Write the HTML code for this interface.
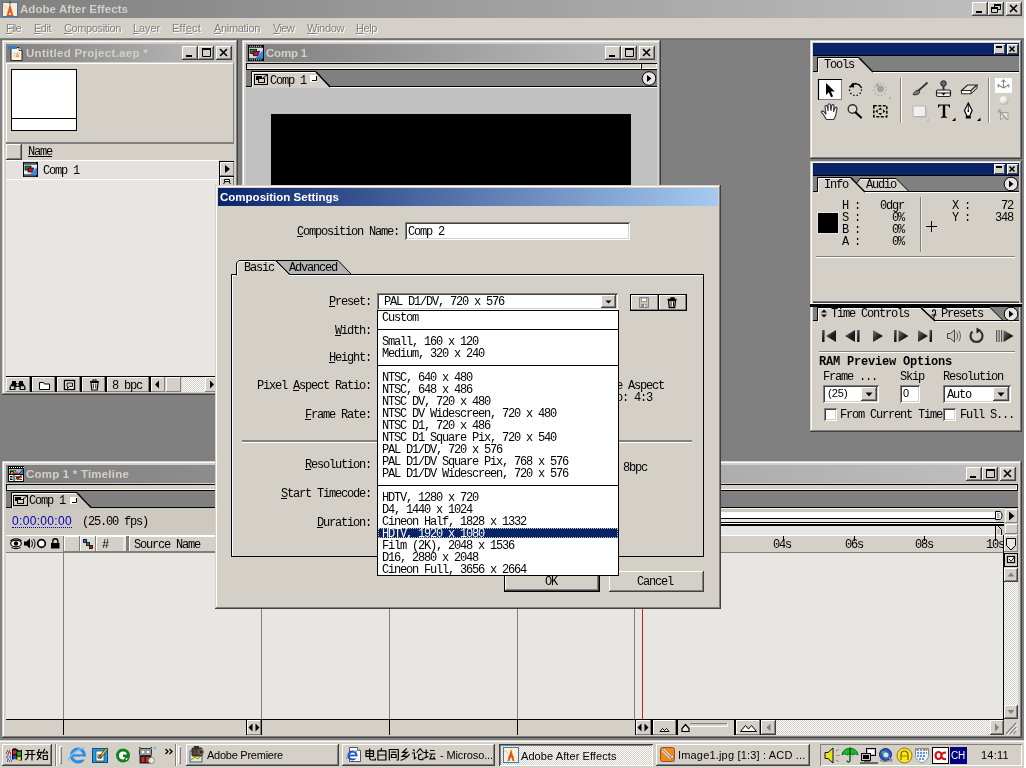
<!DOCTYPE html>
<html><head><meta charset="utf-8"><title>Adobe After Effects</title>
<style>
*{box-sizing:border-box;margin:0;padding:0}
html,body{width:1026px;height:768px;overflow:hidden;background:#808080}
body{position:relative;font-family:"Liberation Sans",sans-serif;font-size:11px;color:#000}
.a{position:absolute}
#root{position:absolute;left:0;top:0;width:1026px;height:768px;will-change:transform}
.s{margin-top:1px;font-family:"Liberation Mono",monospace;font-size:12px;letter-spacing:-1.2px;line-height:12px;white-space:pre;color:#000}
.t{font-family:"Liberation Sans",sans-serif;font-size:11px;line-height:13px;white-space:pre}
.tb{font-family:"Liberation Sans",sans-serif;font-size:11.5px;font-weight:bold;line-height:13px;white-space:pre}
.mi{color:#808080;text-shadow:1px 1px #fff;font-size:11px}
.face{background:#d4d0c8}
.win{background:#d4d0c8;box-shadow:inset -1px -1px #404040,inset 1px 1px #d4d0c8,inset -2px -2px #808080,inset 2px 2px #fff}
.btn{background:#d4d0c8;box-shadow:inset -1px -1px #404040,inset 1px 1px #fff,inset -2px -2px #808080,inset 2px 2px #d4d0c8}
.btn1{background:#d4d0c8;box-shadow:inset -1px -1px #808080,inset 1px 1px #fff}
.sunk{box-shadow:inset 1px 1px #808080,inset -1px -1px #fff,inset 2px 2px #404040,inset -2px -2px #d4d0c8}
.sunk1{box-shadow:inset 1px 1px #808080,inset -1px -1px #fff}
.dith{background-image:conic-gradient(#fff 25%,#d4d0c8 0 50%,#fff 0 75%,#d4d0c8 0);background-size:2px 2px}
.pb{width:11px;height:10px;background:#d4d0c8;box-shadow:inset 1px 1px #fff,inset -1px -1px #404040}
.icap{background:linear-gradient(90deg,#808080,#c0c0c0)}
u{text-decoration:underline}
svg{position:absolute;overflow:visible}
</style></head><body><div id="root">

<!-- right white strip -->
<div class="a" style="left:1024px;top:0;width:2px;height:768px;background:#fff"></div>

<!-- APP TITLE BAR -->
<div class="a icap" id="apptitle" style="left:0;top:0;width:1024px;height:18px"></div>
<div class="a tb" id="apptxt" style="letter-spacing:0.057px;left:20px;top:3px;color:#d4d0c8">Adobe After Effects</div>
<div class="a btn" style="left:972px;top:2px;width:16px;height:14px"></div>
<div class="a btn" style="left:988px;top:2px;width:16px;height:14px"></div>
<div class="a btn" style="left:1006px;top:2px;width:16px;height:14px"></div>

<svg class="a" style="left:2px;top:1px" width="16" height="16" viewBox="0 0 16 16"><rect x=".5" y="1.500" width="15" height="14" fill="#fdebd0" stroke="#3a78b0"/><path d="M1 4l5 4" stroke="#f0c890" stroke-width=".8"/><path d="M8 2.500l-3.200 12h1.800l1.400-5 1.400 5h1.800z" fill="#d85a20"/><path d="M5.500 11h5M4.500 14.500h7" stroke="#d85a20" stroke-width="1"/><path d="M8 0v3" stroke="#222" stroke-width="1"/><path d="M5 1.500h6" stroke="#3a78b0"/></svg>
<svg class="a" style="left:972px;top:2px" width="50" height="14" viewBox="0 0 50 14"><rect x="4" y="9" width="6" height="2" fill="#000"/><path d="M22.500 3.500h6v4h-6z" fill="none" stroke="#000" stroke-width="1"/><rect x="22" y="2" width="7" height="2" fill="#000"/><path d="M19.500 6.500h6v4h-6z" fill="#d4d0c8" stroke="#000" stroke-width="1"/><rect x="19" y="5" width="7" height="2" fill="#000"/><path d="M38 3l7 7M45 3l-7 7" stroke="#000" stroke-width="1.600"/></svg>
<!-- MENU BAR -->
<div class="a face" style="left:0;top:18px;width:1024px;height:20px"></div>
<div class="a" style="left:0;top:38px;width:1024px;height:1px;background:#808080"></div>
<div class="a" style="left:0;top:39px;width:1024px;height:1px;background:#707070"></div>
<div class="a t mi" id="m0" style="letter-spacing:-0.688px;left:6px;top:22px"><u>F</u>ile</div>
<div class="a t mi" id="m1" style="letter-spacing:-0.492px;left:34px;top:22px"><u>E</u>dit</div>
<div class="a t mi" id="m2" style="letter-spacing:-0.378px;left:64px;top:22px"><u>C</u>omposition</div>
<div class="a t mi" id="m3" style="letter-spacing:-0.106px;left:133px;top:22px"><u>L</u>ayer</div>
<div class="a t mi" id="m4" style="letter-spacing:0.174px;left:172px;top:22px">Eff<u>e</u>ct</div>
<div class="a t mi" id="m5" style="letter-spacing:-0.325px;left:214px;top:22px"><u>A</u>nimation</div>
<div class="a t mi" id="m6" style="letter-spacing:-0.664px;left:273px;top:22px"><u>V</u>iew</div>
<div class="a t mi" id="m7" style="letter-spacing:-0.357px;left:307px;top:22px"><u>W</u>indow</div>
<div class="a t mi" id="m8" style="letter-spacing:-0.410px;left:356px;top:22px"><u>H</u>elp</div>

<!-- PROJECT WINDOW -->
<div class="a win" style="left:2px;top:40px;width:236px;height:355px"></div>
<div class="a icap" style="left:6px;top:44px;width:228px;height:18px"></div>
<svg class="a" style="left:8px;top:45px" width="16" height="16" viewBox="0 0 16 16"><path d="M3 2.5h8l3 3v10H3z" fill="#fff7ea" stroke="#222" stroke-width="1"/><rect x="0" y="1" width="9" height="3" fill="#2f7fd0"/><path d="M11 2.5v3h3" fill="#fff" stroke="#222" stroke-width=".8"/><path d="M8 12l1.5-5 1.5 5z" fill="#e0703a"/><rect x="5" y="7" width="7" height="6" fill="#f6c690" opacity=".5"/></svg>
<div class="a tb" id="projtxt" style="letter-spacing:0.288px;left:26px;top:47px;color:#d4d0c8">Untitled Project.aep *</div>
<div class="a btn" style="left:182px;top:46px;width:16px;height:14px"></div>
<div class="a btn" style="left:198px;top:46px;width:16px;height:14px"></div>
<div class="a btn" style="left:216px;top:46px;width:16px;height:14px"></div>
<svg class="a" style="left:182px;top:46px" width="50" height="14" viewBox="0 0 50 14"><rect x="4" y="9" width="6" height="2" fill="#000"/><path d="M20.5 3.5h8v7h-8z M20 3h9" fill="none" stroke="#000" stroke-width="1"/><rect x="20" y="2" width="9" height="2" fill="#000"/><path d="M38 3l7 7M45 3l-7 7" stroke="#000" stroke-width="1.6"/></svg>
<!-- upper panel -->
<div class="a btn1" style="left:6px;top:63px;width:228px;height:81px;box-shadow:inset -1px -2px #808080,inset 1px 1px #fff"></div>
<div class="a" style="left:11px;top:69px;width:66px;height:62px;background:#fff;border:1px solid #000"></div>
<div class="a" style="left:11px;top:118px;width:66px;height:1px;background:#000"></div>
<!-- header -->
<div class="a face" style="left:6px;top:144px;width:228px;height:16px"></div>
<div class="a btn" style="left:6px;top:144px;width:16px;height:16px"></div>
<div class="a s" style="left:28px;top:145px"><u>Name</u></div>
<!-- list -->
<div class="a" style="left:6px;top:160px;width:228px;height:217px;background:#e8e6e2"></div>
<div class="a" style="left:6px;top:160px;width:213px;height:1px;background:#fff"></div>
<div class="a" style="left:6px;top:161px;width:213px;height:18px;background:#e4e2de"></div>
<div class="a" style="left:6px;top:179px;width:213px;height:1px;background:#fff"></div>
<svg class="a" style="left:23px;top:162px" width="15" height="15" viewBox="0 0 15 15"><rect width="15" height="15" fill="#000"/><rect x="1" y="2.5" width="13" height="10" fill="#e8e8ff"/><path d="M7 12.5L14 5v7.5z" fill="#1f8fff"/><rect x="2" y="4" width="6" height="4" fill="#1a8a3a" stroke="#000" stroke-width=".7"/><path d="M5 6h6l-2 4H5z" fill="#e01010" stroke="#000" stroke-width=".7"/><path d="M1.5 1.2h12M1.5 13.8h12" stroke="#fff" stroke-width="1" stroke-dasharray="1 1"/></svg>
<div class="a s" style="left:43px;top:164px">Comp 1</div>
<div class="a face" style="left:219px;top:160px;width:15px;height:217px"></div>
<div class="a" style="left:219px;top:161px;width:1px;height:216px;background:#000"></div>
<div class="a" style="left:219px;top:161px;width:15px;height:1px;background:#000"></div>
<div class="a btn1" style="left:220px;top:162px;width:14px;height:14px"></div>
<div class="a" style="left:219px;top:176px;width:15px;height:1px;background:#000"></div>
<div class="a btn1" style="left:220px;top:177px;width:14px;height:14px"></div>
<svg class="a" style="left:220px;top:162px" width="14" height="30"><path d="M5 3l5 4-5 4z" fill="#000"/><path d="M4.500 17.500h5v2h-5zM5 20l-1.500 2M9 20l1.500 2" fill="#fff" stroke="#000" stroke-width="1"/></svg>
<!-- bottom toolbar -->
<div class="a face" style="left:6px;top:377px;width:228px;height:14px"></div>
<div class="a" style="left:6px;top:376px;width:228px;height:1px;background:#000"></div>
<div class="a btn1" style="left:6px;top:377px;width:24px;height:15px"></div>
<div class="a btn1" style="left:32px;top:377px;width:23px;height:15px"></div>
<div class="a btn1" style="left:57px;top:377px;width:23px;height:15px"></div>
<div class="a btn1" style="left:82px;top:377px;width:23px;height:15px"></div>
<div class="a btn1" style="left:107px;top:377px;width:42px;height:15px"></div>
<div class="a btn1" style="left:151px;top:377px;width:14px;height:15px"></div>
<div class="a btn1" style="left:166px;top:377px;width:15px;height:15px"></div>
<div class="a dith" style="left:182px;top:377px;width:23px;height:15px"></div>
<div class="a btn1" style="left:205px;top:377px;width:14px;height:15px"></div>
<div class="a" style="left:30px;top:377px;width:2px;height:15px;background:#000"></div>
<div class="a" style="left:55px;top:377px;width:2px;height:15px;background:#000"></div>
<div class="a" style="left:80px;top:377px;width:2px;height:15px;background:#000"></div>
<div class="a" style="left:105px;top:377px;width:2px;height:15px;background:#000"></div>
<div class="a" style="left:149px;top:377px;width:2px;height:15px;background:#000"></div>
<svg class="a" style="left:6px;top:377px" width="214" height="15" viewBox="0 0 214 15">
<g fill="#000"><path d="M6 4h4v2h3V4h4v2l2.500 4v3h-6v-3h-4v3h-6v-3l2.500-4z"/><rect x="4.800" y="9.300" width="3.400" height="2.700" fill="#d4d0c8"/><rect x="14.800" y="9.300" width="3.400" height="2.700" fill="#d4d0c8"/><rect x="10.500" y="6.500" width="2" height="2.500" fill="#d4d0c8"/></g>
<path d="M33.500 5.500h4l1 1.500h5v5.500h-10z" fill="#fff" stroke="#000" stroke-width="1"/>
<rect x="58.500" y="3.500" width="10" height="9" fill="#fff" stroke="#000" stroke-width="1.400"/><path d="M61 6h5.500v3.500h-3l-2 2v-2h-.5z" fill="#d4d0c8" stroke="#000" stroke-width=".9"/>
<path d="M84 4.500h9M87 4V3h3v1M85 5.500l.8 7.500h5.400l.8-7.500z" fill="#fff" stroke="#000" stroke-width="1.200"/><path d="M87.300 6.500v5M89.800 6.500v5" stroke="#000" stroke-width=".9"/>
<path d="M149 7.500l4-4v8z" fill="#000"/><path d="M208 7.500l-4-4v8z" fill="#000"/></svg>
<div class="a s" style="left:112px;top:379px">8 bpc</div>

<!-- COMP WINDOW -->
<div class="a win" style="left:242px;top:40px;width:419px;height:200px"></div>
<div class="a icap" style="left:246px;top:44px;width:411px;height:18px"></div>
<svg class="a" style="left:248px;top:45px" width="16" height="16" viewBox="0 0 15 15"><rect width="15" height="15" fill="#000"/><rect x="1" y="2.500" width="13" height="10" fill="#d8d8e8"/><path d="M7 12.500L14 5v7.500z" fill="#1f8fff"/><rect x="2" y="4" width="6" height="4" fill="#1a8a3a" stroke="#000" stroke-width=".7"/><path d="M5 6h6l-2 4H5z" fill="#e01010" stroke="#000" stroke-width=".7"/><path d="M1.500 1.200h12M1.500 13.800h12" stroke="#fff" stroke-width="1" stroke-dasharray="1 1"/></svg>
<div class="a tb" style="letter-spacing:-0.195px;left:266px;top:47px;color:#d4d0c8">Comp 1</div>
<div class="a btn" style="left:605px;top:46px;width:16px;height:14px"></div>
<div class="a btn" style="left:621px;top:46px;width:16px;height:14px"></div>
<div class="a btn" style="left:639px;top:46px;width:16px;height:14px"></div>
<svg class="a" style="left:605px;top:46px" width="50" height="14" viewBox="0 0 50 14"><rect x="4" y="9" width="6" height="2" fill="#000"/><path d="M20.500 3.500h8v7h-8z" fill="none" stroke="#000" stroke-width="1"/><rect x="20" y="2" width="9" height="2" fill="#000"/><path d="M38 3l7 7M45 3l-7 7" stroke="#000" stroke-width="1.600"/></svg>
<!-- white bar -->
<div class="a" style="left:246px;top:63px;width:411px;height:7px;background:#000"></div>
<div class="a" style="left:247px;top:64px;width:394px;height:5px;background:#d4d0c8;box-shadow:inset -1px -1px #fff"></div>
<div class="a" style="left:642px;top:64px;width:15px;height:5px;background:#d4d0c8;box-shadow:inset -1px -1px #fff"></div>
<!-- tab strip -->
<div class="a" style="left:246px;top:70px;width:411px;height:16px;background:#808080"></div>
<svg class="a" style="left:246px;top:70px" width="411" height="18" viewBox="0 0 411 18"><path d="M0 16.500h5.500V1.500H70L84 16.500H411" fill="none" stroke="#000" stroke-width="1"/><path d="M6 17V2H70L84 17z" fill="#d4d0c8"/><path d="M6.500 17V2.500H69.500" fill="none" stroke="#fff" stroke-width="1"/><path d="M70 2L84 17" stroke="#000" stroke-width="1.200"/><path d="M84 17.500H411" stroke="#fff" stroke-width="1"/>
<rect x="8.500" y="4.500" width="13" height="10" fill="#d4d0c8" stroke="#000" stroke-width="1"/><rect x="10" y="6" width="6" height="4" fill="#000"/><rect x="12.500" y="8.500" width="6" height="4" fill="#d4d0c8" stroke="#000" stroke-width="1"/><path d="M17 8l4-3" stroke="#000" stroke-width="1"/>
<rect x="64" y="5" width="7" height="7" fill="#fff"/><path d="M66 10.500h4.500V6" fill="none" stroke="#000" stroke-width="1"/>
<circle cx="403" cy="8.500" r="6.800" fill="#e8e6e2" stroke="#000" stroke-width="1"/><path d="M401 5l4.500 3.500L401 12z" fill="#000"/></svg>
<div class="a s" style="left:270px;top:74px">Comp 1</div>
<!-- comp view -->
<div class="a" style="left:246px;top:88px;width:411px;height:120px;background:#c0c0c0"></div>
<div class="a" style="left:271px;top:114px;width:360px;height:100px;background:#000"></div>

<!-- TIMELINE WINDOW -->
<div class="a win" style="left:2px;top:461px;width:1020px;height:277px"></div>
<div class="a icap" style="left:6px;top:465px;width:1012px;height:18px"></div>
<svg class="a" style="left:8px;top:466px" width="16" height="16" viewBox="0 0 16 16"><rect width="16" height="16" fill="#000"/><path d="M1 1.500h15" stroke="#fff" stroke-width="1" stroke-dasharray="1 1"/><rect x="1" y="3" width="14" height="5" fill="#aab4b4"/><path d="M2.500 8V4.500h5V6" fill="none" stroke="#1f8a2a" stroke-width="1.200"/><path d="M2.500 8V5.500h3V7" fill="none" stroke="#000" stroke-width=".8"/><rect x="4.500" y="6.500" width="6" height="1.500" fill="#e01010"/><path d="M11 8l4-4.500V8z" fill="#1f8fff"/><path d="M11 8l4-4.500" stroke="#000" stroke-width=".8"/><rect x="1" y="9" width="14" height="6" fill="#fff"/><rect x="2" y="10" width="2.500" height="1.500" fill="#000"/><rect x="2" y="12.500" width="2.500" height="1.500" fill="#000"/><rect x="5.500" y="9" width="1" height="6" fill="#000"/><path d="M7 10.500h4" stroke="#1f8a2a" stroke-width="1"/><path d="M10 10.500h3" stroke="#e01010" stroke-width="1"/><path d="M7 13h6" stroke="#1f8a2a" stroke-width="1"/><path d="M9 13.500h5" stroke="#e01010" stroke-width="1"/><path d="M8 11.500h4M8 12.200h3" stroke="#000" stroke-width=".8"/><rect x="12.500" y="9" width="1" height="3" fill="#000"/></svg>
<div class="a tb" style="letter-spacing:0.207px;left:26px;top:468px;color:#d4d0c8">Comp 1 * Timeline</div>
<div class="a btn" style="left:966px;top:467px;width:16px;height:14px"></div>
<div class="a btn" style="left:982px;top:467px;width:16px;height:14px"></div>
<div class="a btn" style="left:1000px;top:467px;width:16px;height:14px"></div>
<svg class="a" style="left:966px;top:467px" width="50" height="14" viewBox="0 0 50 14"><rect x="4" y="9" width="6" height="2" fill="#000"/><path d="M20.500 3.500h8v7h-8z" fill="none" stroke="#000" stroke-width="1"/><rect x="20" y="2" width="9" height="2" fill="#000"/><path d="M38 3l7 7M45 3l-7 7" stroke="#000" stroke-width="1.600"/></svg>
<!-- white bar -->
<div class="a" style="left:6px;top:484px;width:1012px;height:7px;background:#000"></div>
<div class="a" style="left:7px;top:485px;width:1010px;height:5px;background:#d4d0c8;box-shadow:inset -1px -1px #fff"></div>
<!-- tab strip -->
<div class="a" style="left:6px;top:491px;width:1012px;height:16px;background:#808080"></div>
<div class="a" style="left:6px;top:507px;width:1012px;height:1px;background:#000"></div>
<!-- time row -->
<div class="a" style="left:6px;top:508px;width:1012px;height:27px;background:#cdc8c0"></div>
<svg class="a" style="left:6px;top:491px" width="100" height="18" viewBox="0 0 100 18"><path d="M0 16.500H5.500V1.500H71L85 16.500" fill="none" stroke="#000" stroke-width="1"/><path d="M6 18V2H71L86 18z" fill="#c9c6c1"/><path d="M6.500 17V2.500H70.500" fill="none" stroke="#fff" stroke-width="1"/><path d="M71 2L85 16.500" stroke="#000" stroke-width="1.200"/>
<rect x="7.500" y="4.500" width="14" height="10" fill="#d4d0c8" stroke="#000" stroke-width="1"/><rect x="9" y="6" width="6" height="4" fill="#000"/><rect x="11.500" y="8.500" width="6" height="4" fill="#d4d0c8" stroke="#000" stroke-width="1"/><path d="M17 8l4-3" stroke="#000" stroke-width="1"/>
<rect x="64" y="6" width="7" height="7" fill="#fff"/><path d="M66 11.500h4.500V7" fill="none" stroke="#000" stroke-width="1"/></svg>
<div class="a s" style="left:29px;top:494px">Comp 1</div>
<div class="a t" style="letter-spacing:0.328px;left:12px;top:515px;color:#0000c0;font-size:12px;border-bottom:1px dotted #0000c0;line-height:12px">0:00:00:00</div>
<div class="a s" style="left:82px;top:515px">(25.00 fps)</div>
<!-- time navigator right of dialog -->
<div class="a" style="left:480px;top:508px;width:524px;height:1px;background:#f4f2ee"></div>
<div class="a" style="left:480px;top:512px;width:516px;height:6px;background:#fff"></div>
<div class="a" style="left:480px;top:518px;width:516px;height:1px;background:#000"></div>
<div class="a" style="left:480px;top:519px;width:516px;height:3px;background:#e8e8e8"></div>
<div class="a" style="left:480px;top:522px;width:524px;height:1px;background:#000"></div>
<div class="a" style="left:480px;top:523px;width:524px;height:1px;background:#fff"></div>
<div class="a" style="left:480px;top:524px;width:524px;height:2px;background:#000"></div>
<div class="a" style="left:480px;top:526px;width:516px;height:9px;background:#e6e6e6"></div>
<div class="a" style="left:996px;top:526px;width:8px;height:9px;background:#cdc8c0"></div>
<svg class="a" style="left:994px;top:510px" width="10" height="26"><path d="M1.500 1.500h3.500c2 0 3 1.500 3 4s-1 4-3 4H1.500z" fill="#fff" stroke="#000"/><rect x="3" y="3" width="2.500" height="5" fill="#b0b0b0"/><path d="M1.500 15.500h2l4 4v6h-6z" fill="#e0e0e0" stroke="#000"/><rect x="3.500" y="19" width="2" height="5" fill="#b0b0b0"/></svg>
<!-- header row -->
<div class="a face" style="left:6px;top:535px;width:1012px;height:17px"></div>
<div class="a" style="left:6px;top:535px;width:1012px;height:1px;background:#fff"></div>
<div class="a" style="left:6px;top:552px;width:998px;height:1px;background:#808080"></div>
<!-- body -->
<div class="a" style="left:6px;top:553px;width:998px;height:166px;background:#e8e6e2"></div>
<div class="a" style="left:63px;top:536px;width:1px;height:183px;background:#808080"></div>
<div class="a btn1" style="left:64px;top:536px;width:16px;height:16px"></div>
<div class="a btn1" style="left:80px;top:536px;width:16px;height:16px;background:#dcdad4"></div>
<div class="a btn1" style="left:96px;top:536px;width:31px;height:16px"></div>
<div class="a" style="left:123px;top:537px;width:3px;height:14px;background:#e8e6e2;box-shadow:1px 0 #808080"></div>
<div class="a btn1" style="left:129px;top:536px;width:400px;height:16px"></div>
<div class="a" style="left:127px;top:536px;width:2px;height:16px;background:#808080"></div>
<svg class="a" style="left:6px;top:536px" width="100" height="16" viewBox="6 536 100 16">
<ellipse cx="16" cy="543.500" rx="5.300" ry="3.300" fill="#fff" stroke="#000" stroke-width="1.200"/><circle cx="16" cy="543.500" r="2.200" fill="#000"/><path d="M10.500 541c3-3 8-3 11 0" fill="none" stroke="#000" stroke-width="1.200"/><path d="M11.500 547.500c3 1.500 6 1.500 9 0" fill="none" stroke="#000" stroke-width="1"/>
<path d="M24 541.500h2.500l3.500-3v10l-3.500-3H24z" fill="#000"/><path d="M31.500 540.500c1.200 2 1.200 4.500 0 6.500M33.500 539c2 3 2 6.500 0 9.500" fill="none" stroke="#000" stroke-width="1"/>
<circle cx="41.500" cy="543.500" r="3.800" fill="#fff" stroke="#000" stroke-width="1.700"/>
<rect x="51" y="543" width="8.500" height="5.500" fill="#000"/><path d="M52.800 543v-2c0-3 5-3 5 0v2" fill="none" stroke="#000" stroke-width="1.300"/>
<rect x="83.500" y="539.500" width="3" height="3" fill="#1f6fff" stroke="#000" stroke-width=".8"/><rect x="86.500" y="542.500" width="3" height="3" fill="#1a9a3a" stroke="#000" stroke-width=".8"/><rect x="89.500" y="545.500" width="3" height="3" fill="#e01010" stroke="#000" stroke-width=".8"/></svg>
<div class="a s" style="left:102px;top:538px">#</div>
<div class="a s" style="left:134px;top:538px">Source Name</div>
<!-- ruler labels -->
<div class="a s" style="left:773px;top:538px">04s</div><div class="a s" style="left:845px;top:538px">06s</div><div class="a s" style="left:915px;top:538px">08s</div><div class="a s" style="left:986px;top:538px">10s</div>
<div class="a" style="left:783px;top:536px;width:1px;height:5px;background:#000"></div><div class="a" style="left:854px;top:536px;width:1px;height:5px;background:#000"></div><div class="a" style="left:924px;top:536px;width:1px;height:5px;background:#000"></div><div class="a" style="left:995px;top:530px;width:1px;height:11px;background:#000"></div>
<!-- body vertical lines -->
<div class="a" style="left:261px;top:553px;width:1px;height:166px;background:#808080"></div>
<div class="a" style="left:389px;top:553px;width:1px;height:166px;background:#808080"></div>
<div class="a" style="left:517px;top:553px;width:1px;height:166px;background:#808080"></div>
<div class="a" style="left:634px;top:553px;width:1px;height:166px;background:#808080"></div>
<div class="a" style="left:642px;top:553px;width:1px;height:166px;background:#d02020"></div>
<!-- right column -->
<div class="a face" style="left:1004px;top:508px;width:14px;height:227px"></div>
<div class="a" style="left:1003px;top:535px;width:1px;height:185px;background:#000"></div>
<div class="a btn1" style="left:1005px;top:509px;width:13px;height:14px"></div>
<div class="a btn1" style="left:1005px;top:524px;width:13px;height:10px"></div>
<div class="a btn1" style="left:1004px;top:535px;width:14px;height:17px"></div>
<div class="a" style="left:1004px;top:553px;width:14px;height:14px;background:#d4d0c8;border:1px solid #000"></div>
<div class="a btn" style="left:1004px;top:568px;width:14px;height:14px"></div>
<div class="a dith" style="left:1004px;top:582px;width:14px;height:123px"></div>
<div class="a btn" style="left:1004px;top:705px;width:14px;height:14px"></div>
<svg class="a" style="left:1004px;top:508px" width="14" height="212" viewBox="1004 508 14 212"><path d="M1009 511.500l5.500 4.500-5.500 4.500z" fill="#000"/><path d="M1006.500 538.500h9v7l-4.500 4.500-4.500-4.500z" fill="#e8e6e2" stroke="#000" stroke-width="1"/><rect x="1007.500" y="556.500" width="7" height="6" fill="#fff" stroke="#000" stroke-width="1.200"/><path d="M1009 559l2 2.500 3.500-4.500" fill="none" stroke="#000" stroke-width="1"/><path d="M1011 572.500l3.500 4h-7z" fill="#808080"/><path d="M1011 714l3.500-4h-7z" fill="#808080"/></svg>
<!-- bottom strip -->
<div class="a" style="left:6px;top:719px;width:998px;height:1px;background:#000"></div>
<div class="a face" style="left:6px;top:720px;width:1012px;height:15px"></div>
<div class="a" style="left:63px;top:720px;width:1px;height:15px;background:#000"></div>
<div class="a" style="left:261px;top:720px;width:1px;height:15px;background:#000"></div>
<div class="a" style="left:389px;top:720px;width:1px;height:15px;background:#000"></div>
<div class="a" style="left:517px;top:720px;width:1px;height:15px;background:#000"></div>
<div class="a btn1" style="left:246px;top:720px;width:15px;height:15px;border-left:1px solid #000"></div>
<div class="a btn1" style="left:635px;top:720px;width:16px;height:15px;border-left:1px solid #000"></div>
<div class="a" style="left:651px;top:720px;width:2px;height:15px;background:#000"></div>
<div class="a btn1" style="left:653px;top:720px;width:23px;height:15px"></div>
<div class="a" style="left:676px;top:720px;width:2px;height:15px;background:#000"></div>
<div class="a" style="left:734px;top:720px;width:2px;height:15px;background:#000"></div>
<div class="a btn1" style="left:736px;top:720px;width:24px;height:15px"></div>
<div class="a" style="left:760px;top:720px;width:1px;height:15px;background:#000"></div>
<div class="a btn" style="left:761px;top:720px;width:15px;height:15px"></div>
<div class="a dith" style="left:776px;top:720px;width:214px;height:15px"></div>
<div class="a btn" style="left:990px;top:720px;width:14px;height:15px"></div>
<svg class="a" style="left:6px;top:720px" width="1012" height="15" viewBox="6 720 1012 15">
<path d="M252.500 723.500v8l-4-4zM255.500 723.500v8l4-4z" fill="#000"/><path d="M641.500 723.500v8l-4-4zM644.500 723.500v8l4-4z" fill="#000"/>
<path d="M660 731.500l2.500-3 2 2 2-2 2.500 3z" fill="#fff" stroke="#000" stroke-width="1"/>
<path d="M682 731.500v-3l3.500-4 3.500 4v3z" fill="#e8e6e2" stroke="#000" stroke-width="1.200"/><rect x="690" y="723" width="37" height="4" fill="#d4d0c8"/><path d="M690 723.500h37" stroke="#808080"/><path d="M690 726.500h37.500v-3" fill="none" stroke="#fff"/>
<path d="M740.500 731.500l5-6 3 3.500 3-3.500 5 6z" fill="#fff" stroke="#000" stroke-width="1"/>
<path d="M770.500 723.500v8l-4-4z" fill="#808080"/><path d="M995 723.500v8l4-4z" fill="#808080"/>
<path d="M1016 723l-10 11M1016 727l-6 7M1016 731l-3 3" stroke="#808080" stroke-width="1.200"/><path d="M1017 724l-10 11M1017 728l-6 7" stroke="#fff" stroke-width="1"/></svg>

<!-- DIALOG -->
<div class="a win" style="left:215px;top:185px;width:506px;height:424px"></div>
<div class="a" style="left:218px;top:188px;width:500px;height:18px;background:linear-gradient(90deg,#0a246a,#a6caf0)"></div>
<div class="a tb" style="letter-spacing:0.008px;left:220px;top:191px;color:#fff">Composition Settings</div>
<div class="a s" style="left:297px;top:225px"><u>C</u>omposition Name:</div>
<div class="a sunk" style="left:405px;top:222px;width:225px;height:18px;background:#fff"></div>
<div class="a s" style="left:408px;top:225px">Comp 2</div>
<div class="a" style="left:231px;top:274px;width:473px;height:283px;border:1px solid #000;box-shadow:inset 1px 1px #fff"></div>
<svg class="a" style="left:231px;top:258px" width="131" height="18" viewBox="-1 0 131 18"><path d="M44 2.500H106L119.500 16.500H58z" fill="#b4b4b4" stroke="#000" stroke-width="1"/><path d="M4.500 17.500V5L7 2.500H43.500L57.500 16.500" fill="#d4d0c8" stroke="#000" stroke-width="1"/><path d="M5.500 17.500V5.500L7.500 3.500H43" fill="none" stroke="#fff" stroke-width="1"/><rect x="5" y="16" width="51.500" height="2" fill="#d4d0c8"/><rect x="5" y="16" width="1" height="2" fill="#fff"/></svg>
<div class="a s" style="left:244px;top:261px">Basic</div>
<div class="a s" style="left:289px;top:261px">Advanced</div>
<div class="a s" style="left:329px;top:295px"><u>P</u>reset:</div>
<div class="a s" style="left:335px;top:324px"><u>W</u>idth:</div>
<div class="a s" style="left:329px;top:351px"><u>H</u>eight:</div>
<div class="a s" style="left:257px;top:379px">Pixel <u>A</u>spect Ratio:</div>
<div class="a s" style="left:305px;top:408px"><u>F</u>rame Rate:</div>
<div class="a s" style="left:305px;top:458px"><u>R</u>esolution:</div>
<div class="a s" style="left:281px;top:487px"><u>S</u>tart Timecode:</div>
<div class="a s" style="left:317px;top:516px"><u>D</u>uration:</div>
<div class="a sunk" style="left:377px;top:293px;width:241px;height:17px;background:#fff"></div>
<div class="a s" style="left:384px;top:295px">PAL D1/DV, 720 x 576</div>
<div class="a btn" style="left:601px;top:295px;width:15px;height:13px"></div>
<svg class="a" style="left:601px;top:295px" width="15" height="13"><path d="M4.500 5.500h6l-3 3z" fill="#000"/></svg>
<div class="a" style="left:630px;top:294px;width:57px;height:17px;background:#000"></div>
<div class="a btn1" style="left:631px;top:295px;width:27px;height:15px"></div>
<div class="a btn1" style="left:659px;top:295px;width:27px;height:15px"></div>
<svg class="a" style="left:631px;top:295px" width="56" height="15" viewBox="0 0 56 15"><path d="M8.500 2.500h9v10h-9z" fill="#c8c4bc" stroke="#808080" stroke-width="1"/><rect x="10.500" y="3" width="5" height="3.500" fill="#fff" stroke="#808080" stroke-width=".8"/><rect x="10.500" y="9" width="5" height="3.500" fill="#808080"/><rect x="13" y="9.500" width="1.500" height="2.500" fill="#fff"/><path d="M36.500 4.500h9M40 4V3h3v1M37.500 5.500l.8 7h5.400l.8-7z" fill="#fff" stroke="#000" stroke-width="1.300"/><path d="M40 6.500v5M42.500 6.500v5" stroke="#000" stroke-width="1"/></svg>
<div class="a s" style="left:616px;top:379px">e Aspect</div>
<div class="a s" style="left:616px;top:391px">o: 4:3</div>
<div class="a" style="left:242px;top:440px;width:450px;height:3px;background:#808080;border-bottom:1px solid #fff"></div>
<div class="a s" style="left:623px;top:461px">8bpc</div>
<div class="a" style="left:504px;top:571px;width:96px;height:21px;background:#000"></div>
<div class="a btn" style="left:505px;top:572px;width:94px;height:19px"></div>
<div class="a s" style="left:545px;top:575px">OK</div>
<div class="a btn" style="left:609px;top:571px;width:95px;height:21px"></div>
<div class="a s" style="left:637px;top:575px">Cancel</div>
<div class="a" style="left:377px;top:310px;width:242px;height:266px;background:#fff;border:1px solid #000"></div>
<div class="a" style="left:378px;top:329px;width:240px;height:1px;background:#000"></div>
<div class="a" style="left:378px;top:365px;width:240px;height:1px;background:#000"></div>
<div class="a" style="left:378px;top:485px;width:240px;height:1px;background:#000"></div>
<div class="a" style="left:378px;top:528px;width:240px;height:10px;background:#0a246a;outline:1px dotted #d0c8a0;outline-offset:-1px"></div>
<div class="a s" style="left:382px;top:311px">Custom</div>
<div class="a s" style="left:382px;top:335px">Small, 160 x 120</div>
<div class="a s" style="left:382px;top:347px">Medium, 320 x 240</div>
<div class="a s" style="left:382px;top:371px">NTSC, 640 x 480</div>
<div class="a s" style="left:382px;top:383px">NTSC, 648 x 486</div>
<div class="a s" style="left:382px;top:395px">NTSC DV, 720 x 480</div>
<div class="a s" style="left:382px;top:407px">NTSC DV Widescreen, 720 x 480</div>
<div class="a s" style="left:382px;top:419px">NTSC D1, 720 x 486</div>
<div class="a s" style="left:382px;top:431px">NTSC D1 Square Pix, 720 x 540</div>
<div class="a s" style="left:382px;top:443px">PAL D1/DV, 720 x 576</div>
<div class="a s" style="left:382px;top:455px">PAL D1/DV Square Pix, 768 x 576</div>
<div class="a s" style="left:382px;top:467px">PAL D1/DV Widescreen, 720 x 576</div>
<div class="a s" style="left:382px;top:491px">HDTV, 1280 x 720</div>
<div class="a s" style="left:382px;top:503px">D4, 1440 x 1024</div>
<div class="a s" style="left:382px;top:515px">Cineon Half, 1828 x 1332</div>
<div class="a s" style="left:382px;top:527px;color:#fff">HDTV, 1920 x 1080</div>
<div class="a s" style="left:382px;top:539px">Film (2K), 2048 x 1536</div>
<div class="a s" style="left:382px;top:551px">D16, 2880 x 2048</div>
<div class="a s" style="left:382px;top:563px">Cineon Full, 3656 x 2664</div>
<!-- TOOLS PALETTE -->
<div class="a win" style="left:810px;top:40px;width:212px;height:119px"></div>
<div class="a" style="left:813px;top:43px;width:206px;height:13px;background:#0a246a;border-bottom:1px solid #000"></div>
<div class="a pb" style="left:994px;top:44px"></div><div class="a pb" style="left:1007px;top:44px"></div>
<svg class="a" style="left:994px;top:44px" width="24" height="10"><rect x="2" y="2" width="6" height="2" fill="#000"/><path d="M15.500 2.500l5 5M20.500 2.500l-5 5" stroke="#000" stroke-width="1.500"/></svg>
<div class="a" style="left:813px;top:56px;width:206px;height:16px;background:#808080"></div>
<svg class="a" style="left:813px;top:56px" width="206" height="17" viewBox="0 0 206 17"><path d="M0 15.500H4.500V1.500H46L59 15.500H206" fill="none" stroke="#000" stroke-width="1"/><path d="M5 17V2H46L60 17z" fill="#d4d0c8"/><path d="M5.500 17V2.500H45.500" fill="none" stroke="#fff" stroke-width="1"/><path d="M46 2L60 16" stroke="#000" stroke-width="1.200"/><path d="M60 16.500H206" stroke="#fff" stroke-width="1"/></svg>
<div class="a s" style="left:824px;top:58px">Tools</div>
<!-- tool icons -->
<svg class="a" style="left:810px;top:72px" width="212" height="56" viewBox="810 72 212 56">
<rect x="818.500" y="79.500" width="23" height="20" fill="#fff" stroke="#808080"/><path d="M818.500 100V79.500H842" fill="none" stroke="#000" stroke-width="1.200"/>
<path d="M826 83v12l2.800-2.800 2.300 5 2-1-2.300-4.800h4z" fill="#000"/>
<circle cx="855.500" cy="89.500" r="6" fill="none" stroke="#000" stroke-width="1.400" stroke-dasharray="1.300 2.100"/><path d="M851.500 85.500A6 6 0 0 1 861 87" fill="none" stroke="#000" stroke-width="1.400"/><path d="M849 87l4.500-4.500.7 5z" fill="#000"/>
<circle cx="880" cy="89.500" r="6" fill="none" stroke="#a8a8a8" stroke-width="1.400" stroke-dasharray="1.300 2.100"/><circle cx="880.500" cy="89" r="3.300" fill="#a0a0a0"/><path d="M874.500 86l4-3.500.6 4.500z" fill="#a8a8a8"/><path d="M891 96v3h-3z" fill="#b0b0b0"/>
<path d="M826.500 119.500c-1.500-2.500-3-5-5.200-7.300 .6-1.600 2.200-1.300 3.300 .2l1.400 1.900-1-7.600c0-1.400 1.800-1.600 2.200-.2l1 4.500-.2-6.200c.2-1.500 2.200-1.500 2.400 0l.5 6 .9-5.300c.4-1.400 2.200-1.200 2.200 .3l-.5 6 1.500-3.800c.6-1.200 2.200-.7 2 .6l-1.300 6.500c-.4 2-1.200 3-2 4.400z" fill="#fff" stroke="#333" stroke-width="1.100"/>
<circle cx="852.500" cy="109" r="4.300" fill="#dcdad4" stroke="#333" stroke-width="1.400"/><path d="M855.700 112.500l5.300 5" stroke="#000" stroke-width="2.200" stroke-linecap="round"/>
<rect x="873.800" y="105.800" width="13" height="11" fill="none" stroke="#000" stroke-width="1.500" stroke-dasharray="3 1.500"/><path d="M880.300 107.500l2 2.200h-4zM880.300 115.300l2-2.200h-4zM875.500 111.300l2.200-2v4zM885.300 111.300l-2.200-2v4z" fill="#000"/>
<rect x="900" y="78" width="1" height="45" fill="#808080"/><rect x="901" y="78" width="1" height="45" fill="#fff"/>
<path d="M927.500 82.500l-10 9" stroke="#333" stroke-width="1.800"/><path d="M913 94.500c1.500-3.500 3.500-4.500 5.500-4l1.500 1.500c-1 2.500-4 3.500-7 2.500z" fill="#777" stroke="#222" stroke-width=".8"/>
<circle cx="943.500" cy="83.500" r="2.800" fill="#666" stroke="#222"/><path d="M942.500 86h2v4h-2z" fill="#333"/><rect x="936.500" y="90" width="14" height="6.500" rx="1.500" fill="#eee" stroke="#222" stroke-width="1.200"/><path d="M936.500 93h14" stroke="#222"/><path d="M941.500 93h4l-2 2.500z" fill="#000"/>
<path d="M961.500 90.500l6-5.500h9.500l-6 5.500z" fill="#ddd" stroke="#222" stroke-width="1.100"/><path d="M961.500 90.500v3.300h9.500v-3.300z" fill="#fff" stroke="#222" stroke-width="1"/><path d="M971 93.800l6-5.500V85" fill="none" stroke="#222" stroke-width="1"/>
<rect x="914.500" y="107.500" width="12" height="10" fill="#999" opacity=".5"/><rect x="913" y="106" width="12.500" height="10.500" fill="#f1f0ec" stroke="#aaa" stroke-width=".8"/><path d="M929 118.500v2.500h-2.500z" fill="#b0b0b0"/>
<path d="M938 104.500h12v3h-.8c-.3-1.500-1-2-2.500-2h-1.500v10c0 1 .5 1.300 2 1.400v.8h-6.400v-.8c1.500-.1 2-.4 2-1.400v-10h-1.500c-1.500 0-2.200.5-2.500 2h-.8z" fill="#000"/><path d="M955.500 117.500v3.500H952z" fill="#000"/>
<path d="M968.300 103l-3.800 7.500 2.300 5.500h3l2.300-5.500z" fill="#fff" stroke="#000" stroke-width="1.200"/><path d="M968.300 104v6.500" stroke="#000" stroke-width=".9"/><circle cx="968.300" cy="111" r="1" fill="#000"/><rect x="965.800" y="116" width="5" height="2.500" fill="#000"/><path d="M980.500 117.500v3.500H977z" fill="#000"/>
<rect x="988" y="78" width="1" height="45" fill="#808080"/><rect x="989" y="78" width="1" height="45" fill="#fff"/>
<rect x="995" y="78" width="17" height="15" fill="#fff"/><path d="M1003.500 80v8M1003.500 88l-5-3M1003.500 88l5-3M1001.500 82l2-2.200 2 2.200M998 87.500l.3-2.800 2.300 1.400M1009 87.500l-.3-2.800-2.300 1.400" fill="none" stroke="#888" stroke-width="1.100"/>
<defs><radialGradient id="sg" cx=".35" cy=".3" r=".8"><stop offset="0" stop-color="#fff"/><stop offset=".5" stop-color="#e4e4e4"/><stop offset="1" stop-color="#a0a0a0"/></radialGradient></defs><circle cx="1004" cy="100.500" r="4.600" fill="url(#sg)"/>
<path d="M1000.500 112.500l7.500 0v7.500l-3.700-3-3.800 3z" fill="#e6e4de" stroke="#a0a0a0" stroke-width="1"/><path d="M999 110.500l8 9" stroke="#a0a0a0" stroke-width="1.200"/><path d="M998.500 113v-3h3" fill="none" stroke="#a0a0a0" stroke-width="1"/>
</svg>

<!-- INFO + TIME CONTROLS PALETTE -->
<div class="a win" style="left:810px;top:161px;width:212px;height:271px"></div>
<div class="a" style="left:813px;top:163px;width:206px;height:13px;background:#0a246a;border-bottom:1px solid #000"></div>
<div class="a pb" style="left:994px;top:164px"></div><div class="a pb" style="left:1007px;top:164px"></div>
<svg class="a" style="left:994px;top:164px" width="24" height="10"><rect x="2" y="2" width="6" height="2" fill="#000"/><path d="M15.500 2.500l5 5M20.500 2.500l-5 5" stroke="#000" stroke-width="1.500"/></svg>
<div class="a" style="left:813px;top:176px;width:206px;height:16px;background:#808080"></div>
<svg class="a" style="left:813px;top:176px" width="206" height="17" viewBox="0 0 206 17"><path d="M47 2.500H83L96 15.500H51L43 8z" fill="#d4d0c8" stroke="#000" stroke-width="1"/><path d="M47.500 3.500H82.500" stroke="#fff"/><path d="M0 15.500H4.500V1.500H38L51 15.500H206" fill="none" stroke="#000" stroke-width="1"/><path d="M5 17V2H38L52 17z" fill="#d4d0c8"/><path d="M5.500 17V2.500H37.500" fill="none" stroke="#fff" stroke-width="1"/><path d="M38 2L52 16" stroke="#000" stroke-width="1.200"/><path d="M52 16.500H206" stroke="#fff" stroke-width="1"/>
<circle cx="198" cy="8" r="6.800" fill="#e8e6e2" stroke="#000" stroke-width="1"/><path d="M196 4.500l4.500 3.500L196 11.500z" fill="#000"/></svg>
<div class="a s" style="left:824px;top:178px">Info</div>
<div class="a s" style="left:866px;top:178px">Audio</div>
<div class="a" style="left:818px;top:213px;width:20px;height:20px;background:#000;box-shadow:0 0 0 1px #e8e6e2"></div>
<div class="a s" style="left:842px;top:199px">H :</div><div class="a s" style="left:842px;top:211px">S :</div><div class="a s" style="left:842px;top:223px">B :</div><div class="a s" style="left:842px;top:235px">A :</div>
<div class="a s" style="left:880px;top:199px">0dgr</div><div class="a s" style="left:892px;top:211px">0%</div><div class="a s" style="left:892px;top:223px">0%</div><div class="a s" style="left:892px;top:235px">0%</div>
<div class="a" style="left:920px;top:197px;width:1px;height:55px;background:#808080"></div><div class="a" style="left:921px;top:197px;width:1px;height:55px;background:#e8e6e2"></div>
<svg class="a" style="left:926px;top:221px" width="12" height="12"><path d="M0 5.500h11M5.500 0v11" stroke="#000" stroke-width="1"/></svg>
<div class="a s" style="left:952px;top:199px">X :</div><div class="a s" style="left:952px;top:211px">Y :</div>
<div class="a s" style="left:1001px;top:199px">72</div><div class="a s" style="left:995px;top:211px">348</div>
<div class="a" style="left:816px;top:256px;width:199px;height:1px;background:#808080"></div><div class="a" style="left:816px;top:257px;width:199px;height:1px;background:#fff"></div>
<!-- divider -->
<div class="a" style="left:813px;top:301px;width:206px;height:1px;background:#808080"></div>
<div class="a" style="left:813px;top:302px;width:206px;height:1px;background:#404040"></div>
<div class="a" style="left:810px;top:303px;width:212px;height:1px;background:#fff"></div>
<div class="a" style="left:810px;top:304px;width:212px;height:3px;background:#000"></div>
<!-- time controls tabs -->
<div class="a" style="left:813px;top:307px;width:206px;height:14px;background:#808080"></div>
<svg class="a" style="left:813px;top:306px" width="206" height="16" viewBox="0 0 206 16"><path d="M111 1.500H177L190 14.500H122L106 0z" fill="#d4d0c8" stroke="#000" stroke-width="1"/><path d="M112 2.500H176.500" stroke="#fff"/><path d="M0 14.500H4.500V1.500H108L122 14.500H206" fill="none" stroke="#000" stroke-width="1"/><path d="M5 16V2H108L123 16z" fill="#d4d0c8"/><path d="M5.500 16V2.500H107.500" fill="none" stroke="#fff" stroke-width="1"/><path d="M108 2L122 15" stroke="#000" stroke-width="1.200"/><path d="M123 15.500H206" stroke="#fff" stroke-width="1"/>
<path d="M11 3.500l3 3h-6zM11 11.500l3-3h-6z" fill="#000"/>
<circle cx="198" cy="8" r="6.800" fill="#e8e6e2" stroke="#000" stroke-width="1"/><path d="M196 4.500l4.500 3.500L196 11.500z" fill="#000"/>
<path d="M119.500 6c0-3 3-3 3 0s-3 5-1 6M118.500 9h5" fill="none" stroke="#000" stroke-width="1.100"/></svg>
<div class="a s" style="left:831px;top:307px">Time Controls</div>
<div class="a s" style="left:941px;top:307px">Presets</div>
<!-- transport -->
<svg class="a" style="left:813px;top:322px" width="206" height="30" viewBox="813 322 206 30" fill="url(#tg)"><defs><linearGradient id="tg" x1="0" y1="0" x2="1" y2="1"><stop offset="0" stop-color="#777"/><stop offset=".6" stop-color="#1a1a1a"/></linearGradient></defs>
<rect x="822" y="330" width="2.500" height="12"/><path d="M836 330v12l-10-6z"/>
<path d="M855 330v12l-10-6z"/><rect x="857" y="330" width="2.500" height="12"/>
<path d="M873 330v12l10-6z"/>
<rect x="894" y="330" width="2.500" height="12"/><path d="M898.500 330v12l10-6z"/>
<path d="M918 330v12l10-6z"/><rect x="929.500" y="330" width="2.500" height="12"/>
<path d="M947.500 333.500h3l4-3.500v12l-4-3.500h-3z" fill="#c8c6c0" stroke="#444" stroke-width="1"/><path d="M956.500 332.500c1.500 2 1.500 5 0 7M958.500 330.500c2.500 3 2.500 8 0 11" fill="none" stroke="#555" stroke-width="1"/>
<path d="M972.500 331.500a6 6 0 1 0 8 0" fill="none" stroke="#333" stroke-width="2.200"/><path d="M976.500 327.500v6l5-3z" fill="#222"/>
<rect x="996" y="330" width="1.200" height="12" fill="#555"/><rect x="998.500" y="330" width="1.200" height="12" fill="#555"/><rect x="1001" y="330" width="1.200" height="12" fill="#555"/><path d="M1003.500 330v12l10-6z"/>
</svg>
<div class="a" style="left:819px;top:351px;width:196px;height:1px;background:#808080"></div><div class="a" style="left:819px;top:352px;width:196px;height:1px;background:#fff"></div>
<div class="a s" style="letter-spacing:-0.201px;left:819px;top:355px;font-weight:bold">RAM Preview Options</div>
<div class="a s" style="left:823px;top:370px">Frame ...</div>
<div class="a s" style="left:900px;top:370px">Skip</div>
<div class="a s" style="left:943px;top:370px">Resolution</div>
<div class="a sunk" style="left:823px;top:385px;width:56px;height:18px;background:#fff"></div>
<div class="a btn" style="left:861px;top:387px;width:16px;height:14px"></div>
<div class="a t" style="left:828px;top:387px">(25)</div>
<div class="a sunk" style="left:900px;top:385px;width:20px;height:18px;background:#fff"></div>
<div class="a t" style="left:903px;top:387px">0</div>
<div class="a sunk" style="left:943px;top:385px;width:68px;height:18px;background:#fff"></div>
<div class="a btn" style="left:993px;top:387px;width:16px;height:14px"></div>
<div class="a s" style="left:947px;top:388px">Auto</div>
<svg class="a" style="left:813px;top:385px" width="206" height="18"><path d="M52.500 7.500h7l-3.500 4zM184.500 7.500h7l-3.500 4z" fill="#000"/></svg>
<div class="a sunk" style="left:824px;top:408px;width:13px;height:13px;background:#fff"></div>
<div class="a s" style="left:840px;top:408px">From Current Time</div>
<div class="a sunk" style="left:943px;top:408px;width:13px;height:13px;background:#fff"></div>
<div class="a s" style="left:960px;top:408px">Full S...</div>

<!-- TASKBAR -->
<div class="a face" style="left:0;top:740px;width:1024px;height:28px"></div>
<div class="a" style="left:0;top:741px;width:1024px;height:1px;background:#fff"></div>
<div class="a btn" style="left:2px;top:744px;width:50px;height:22px"></div>
<svg class="a" style="left:6px;top:747px" width="17" height="16" viewBox="0 0 17 16"><path d="M6 2.500c2-2 4-1 5.500 0s3 1.500 4.500 0v10.500c-1.500 1.500-3 1-4.500 0s-3.500-2-5.500 0z" fill="#000"/><path d="M7 3.700c1.300-1 2.300-.7 3.500 0v4c-1.200-.7-2.200-1-3.500 0z" fill="#e02020"/><path d="M11.300 4.200c1.200.7 2.300.7 3.500 0v4c-1.200.7-2.300.7-3.500 0z" fill="#20c020"/><path d="M7 8.700c1.300-1 2.300-.7 3.500 0v4c-1.200-.7-2.200-1-3.500 0z" fill="#2040e0"/><path d="M11.300 9.200c1.200.7 2.300.7 3.500 0v4c-1.200.7-2.300.7-3.500 0z" fill="#e8e020"/><path d="M1 4h4M0 6h5" stroke="#000" stroke-width="1" stroke-dasharray="1 1"/><path d="M1 8h4M2 5h3" stroke="#e02020" stroke-width="1" stroke-dasharray="2 1"/><path d="M0 10h5M1 12h4" stroke="#2040e0" stroke-width="1" stroke-dasharray="2 1"/><path d="M1 14h5" stroke="#000" stroke-dasharray="1 1"/></svg>
<svg class="a cjk" style="left:24px;top:748px" width="24" height="13" viewBox="0 0 24 13"><g fill="none" stroke="#000" stroke-width="1.200">
<path d="M1.500 2.500H10.500M.5 6.500H11.500M4 2.500V7.500Q4 10.500 1 12M8 2.500V12.500"/>
<g transform="translate(12.300,0)"><path d="M3 .8L1.300 6.500 5 10.500M5 3.500Q4.200 9 .5 12M.3 4.500H5.800M8.500 .8L6.500 5H11.200M10 3L11.500 5.500M7 7.500H11V11.500H7z"/></g></g></svg>
<div class="a" style="left:55px;top:744px;width:1px;height:22px;background:#808080"></div><div class="a" style="left:56px;top:744px;width:1px;height:22px;background:#fff"></div>
<div class="a" style="left:59px;top:746px;width:3px;height:18px;background:#d4d0c8;box-shadow:inset 1px 1px #fff,inset -1px -1px #808080"></div>
<!-- quick launch -->
<svg class="a" style="left:66px;top:745px" width="110" height="20" viewBox="66 745 110 20">
<circle cx="78" cy="755.500" r="6.500" fill="none" stroke="#2a8be8" stroke-width="3"/><rect x="73" y="754.300" width="11" height="2.300" fill="#2a8be8"/><rect x="80" y="756.600" width="6" height="3" fill="#d4d0c8"/><path d="M69 761c-2-3 6-11 15-13" fill="none" stroke="#7fbdf0" stroke-width="1.400"/>
<rect x="92.500" y="748.500" width="15" height="14" fill="#1f9fdf" stroke="#0a4a90"/><rect x="96" y="751" width="8" height="10" fill="#fffbe8" stroke="#444" stroke-width=".8"/><path d="M99 757l7-9 1.800 1.300-7 9z" fill="#f0c020" stroke="#222" stroke-width=".7"/><rect x="98" y="755" width="3" height="3" fill="none" stroke="#222" stroke-width=".8"/>
<circle cx="123" cy="755.500" r="5.500" fill="#fff" stroke="#108020" stroke-width="3"/><rect x="123" y="754.500" width="5" height="2.500" fill="#108020"/><circle cx="126.500" cy="759" r="2.300" fill="#108020"/><circle cx="126.500" cy="759" r=".9" fill="#fff"/>
<rect x="139.500" y="748.500" width="12" height="7" rx="1" fill="#999" stroke="#333"/><circle cx="143" cy="752" r="1.300" fill="#fff"/><circle cx="148" cy="752" r="1.300" fill="#fff"/><rect x="139.500" y="755.500" width="12" height="8" fill="#222"/><rect x="141.500" y="757" width="3" height="5" fill="#e02020"/><rect x="146" y="757" width="3" height="5" fill="#e02020"/><path d="M139 747l2 1.500M152 747l-2 1.500" stroke="#333"/><circle cx="151.500" cy="760.500" r="3" fill="#e8e8e8" stroke="#888"/><path d="M153 748l2-2 1.500 4z" fill="#40c8f0"/>
<path d="M165.500 749l2.500 2.500-2.500 2.500M169.500 749l2.500 2.500-2.500 2.500" fill="none" stroke="#000" stroke-width="1.300"/></svg>
<div class="a" style="left:175px;top:744px;width:1px;height:22px;background:#808080"></div><div class="a" style="left:176px;top:744px;width:1px;height:22px;background:#fff"></div>
<div class="a" style="left:178px;top:746px;width:3px;height:18px;background:#d4d0c8;box-shadow:inset 1px 1px #fff,inset -1px -1px #808080"></div>
<!-- task buttons -->
<div class="a btn" style="left:186px;top:744px;width:153px;height:22px"></div>
<svg class="a" style="left:189px;top:746px" width="17" height="17" viewBox="0 0 17 17"><rect x="1" y="5" width="12" height="11" fill="#f4e8a0" stroke="#3060c0"/><rect x="3" y="2" width="10" height="8" rx="1" fill="#5a4030" stroke="#222"/><circle cx="12" cy="6" r="2.500" fill="#303030" stroke="#a08060"/><rect x="5" y="0" width="5" height="3" fill="#303030"/><path d="M2 14l4-3 3 2 3-3" fill="none" stroke="#60a040"/></svg>
<div class="a t" style="letter-spacing:-0.250px;left:207px;top:749px">Adobe Premiere</div>
<div class="a btn" style="left:342px;top:744px;width:153px;height:22px"></div>
<svg class="a" style="left:346px;top:746px" width="17" height="17" viewBox="0 0 17 17"><path d="M3.500 1.500h8l3 3v11h-11z" fill="#fff" stroke="#555"/><path d="M11.500 1.500v3h3" fill="#ddd" stroke="#555" stroke-width=".8"/><circle cx="6.500" cy="9.500" r="4" fill="none" stroke="#2050d0" stroke-width="2.200"/><rect x="3" y="8.600" width="7" height="1.800" fill="#2050d0"/><rect x="8" y="10.400" width="4" height="2.200" fill="#fff"/><path d="M1 13c-1-3 5-8 10-8" fill="none" stroke="#5080e0" stroke-width="1"/></svg>
<svg class="a cjk" style="left:364px;top:748px" width="72" height="13" viewBox="0 0 72 13"><g fill="none" stroke="#000" stroke-width="1.200">
<path d="M2 2.800H9.500V8.300H2zM2 5.500H9.500M5.700 .5V10.500Q5.700 12 7.500 12H11.300V10.300"/>
<g transform="translate(11.900,0)"><path d="M5.800 .3L4.800 2.800M2 2.800H10V12H2zM2 7H10"/></g>
<g transform="translate(23.800,0)"><path d="M1.500 12.500V1.500H10.500V11.500Q10.500 12.200 8.800 12.200M3.500 4.200H8.500M3.700 6.500H8.300V9.500H3.700z"/></g>
<g transform="translate(35.700,0)"><path d="M7 .5L3 4.300H7.500L2.500 8.300H8.500M10 6Q6.500 10.800 1 12.300"/></g>
<g transform="translate(47.600,0)"><path d="M1.300 1.300L3 3M.3 5H2.800V10.800L4.800 9.300M8.500 .5L5 5M8.500 .5L12 5M10 5.800L7 7.500M7 6.300V10.500Q7 11.700 8.500 11.700H11.300V9.800"/></g>
<g transform="translate(59.500,0)"><path d="M.5 4.500H5M2.700 1.500V9.500M.3 10.300L5 8.500M6.500 2.500H11M5.500 6H12M8.500 6L6.500 10.800H11.300M10 8.500L11.800 11.500"/></g></g></svg>
<div class="a t" style="letter-spacing:-0.117px;left:440px;top:749px">- Microso...</div>
<div class="a dith" style="left:499px;top:744px;width:154px;height:22px;box-shadow:inset 1px 1px #404040,inset -1px -1px #fff,inset 2px 2px #808080"></div>
<svg class="a" style="left:503px;top:747px" width="16" height="16" viewBox="0 0 16 16"><rect x=".5" y=".5" width="15" height="15" fill="#fdf0d8" stroke="#3a7ab8"/><path d="M8 2l-3.500 12h2l1.500-5 1.500 5h2z" fill="#d85820"/><path d="M5 10h6" stroke="#d85820"/><path d="M1 3l4 3" stroke="#e8b070" stroke-width=".8"/></svg>
<div class="a t" style="letter-spacing:0.081px;left:521px;top:750px">Adobe After Effects</div>
<div class="a btn" style="left:656px;top:744px;width:154px;height:22px"></div>
<svg class="a" style="left:660px;top:747px" width="16" height="16" viewBox="0 0 16 16"><rect x=".5" y=".5" width="14" height="14" rx="2" fill="#f08820" stroke="#a05010"/><path d="M3 3l8 8" stroke="#fff" stroke-width="3"/><path d="M3 3l8 8" stroke="#888" stroke-width="1.200"/><path d="M10 10l4 1.500-1.500-4z" fill="#fff" stroke="#666" stroke-width=".7"/></svg>
<div class="a t" style="letter-spacing:0.177px;left:678px;top:749px">Image1.jpg [1:3] : ACD ...</div>
<!-- tray -->
<div class="a sunk1" style="left:820px;top:744px;width:202px;height:22px"></div>
<svg class="a" style="left:822px;top:745px" width="150" height="20" viewBox="822 745 150 20">
<path d="M825 752.500h3l5-4.500v15l-5-4.500h-3z" fill="#e8e020" stroke="#000" stroke-width=".9"/><path d="M836 751l2.500-1.500M836.500 755.500h3M836 760l2.500 1.500" stroke="#808080" stroke-width="1"/>
<path d="M842 755c1-9 15-9 16 0c-2-1.500-3.500-1.500-5.300 0c-1.800-1.500-3.500-1.500-5.300 0c-1.800-1.500-3.500-1.500-5.400 0z" fill="#10c020" stroke="#064a10" stroke-width=".8"/><path d="M850 747.500v13c0 2-3 2-3 0" fill="none" stroke="#064a10" stroke-width="1.300"/>
<rect x="866.500" y="748.500" width="9" height="7" fill="#c8c8c8" stroke="#000"/><rect x="868" y="750" width="6" height="4" fill="#fff"/><rect x="861.500" y="753.500" width="9" height="7" fill="#c8c8c8" stroke="#000"/><rect x="863" y="755" width="6" height="4" fill="#000"/><path d="M860 763h18M864 761h6" stroke="#000" stroke-width="1.200"/>
<circle cx="885.500" cy="754.500" r="6" fill="#3058c8" stroke="#102060"/><path d="M881 752c2-2 5-1 6 1s-1 4-3 4" fill="#50b050"/><circle cx="886" cy="755" r="2.500" fill="#d0e0ff"/><path d="M880 760c3 2 9 2 12-1" fill="none" stroke="#808080" stroke-width="1.500"/><path d="M889 757l3 5" stroke="#888" stroke-width="1.300"/>
<circle cx="904.500" cy="755.500" r="7.500" fill="#f8e820" stroke="#907800"/><path d="M901 760v-5.500a3.500 3.500 0 0 1 7 0V760" fill="none" stroke="#806000" stroke-width="1.200"/><path d="M901.500 756h6" stroke="#806000" stroke-width=".8"/>
<path d="M915.500 748.500h13v7c0 3-3 6-6.500 7.500c-3.500-1.500-6.500-4.500-6.500-7.500z" fill="#f4f4f4" stroke="#888"/><path d="M917 750h10M917 753h10M917 756h9M919 759h6" stroke="#2878e0" stroke-width="1.500" stroke-dasharray="2 1"/><path d="M916 749.500h3M925 749.500h3" stroke="#e09020" stroke-width="1.500"/>
<rect x="932.500" y="747.500" width="16" height="16" fill="#fff" stroke="#000"/><path d="M938.500 752a3 3.500 0 1 0 0 7a3 3.500 0 1 0 0-7M946 752.500c-3 0-4.500 1.500-4.500 3.500s1.500 3.500 4.500 3" fill="none" stroke="#e01010" stroke-width="2.200"/>
<rect x="950" y="747" width="17" height="17" fill="#000080"/></svg>
<div class="a t" style="letter-spacing:-0.227px;left:951px;top:749px;color:#fff;font-size:10px">CH</div>
<div class="a t" style="letter-spacing:0.256px;left:981px;top:749px">14:11</div>

<!--SECTIONS-->

</div></body></html>
